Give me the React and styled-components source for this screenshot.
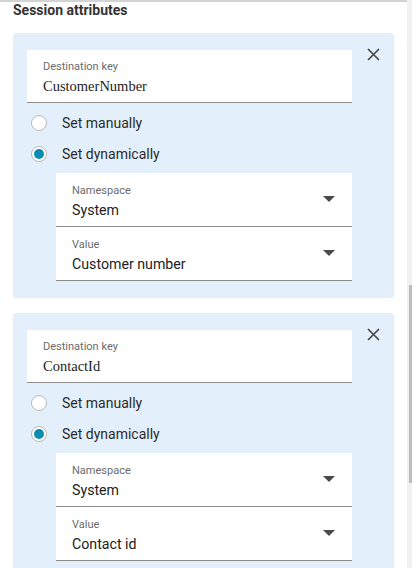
import React from "react";
import styled, { createGlobalStyle } from "styled-components";

const Global = createGlobalStyle`
  html, body { margin: 0; padding: 0; background: #fff; overflow: hidden; }
  body { font-family: Roboto, "Liberation Sans", Arial, sans-serif; }
  * { box-sizing: border-box; }
`;

const Page = styled.div`
  display: flex;
  width: 412px;
  height: 568px;
  overflow: hidden;
`;

const Main = styled.main`
  flex: 1;
  border-top: 2px solid #d3d3d3;
  padding: 0 13px;
`;

const Title = styled.h2`
  margin: 0 0 15px;
  font-size: 14px;
  line-height: 16px;
  font-weight: 700;
  color: #333;
`;

const Card = styled.section`
  background: #e3f0fb;
  border-radius: 3px;
  padding: 17px 0 17px 14px;
  margin-bottom: 15px;
`;

const HeaderRow = styled.div`
  display: flex;
  align-items: flex-start;
`;

const Field = styled.div`
  flex: ${(p) => (p.$select ? "none" : "1")};
  display: flex;
  align-items: center;
  background: #fff;
  border-bottom: 1px solid #8c8c8c;
  height: ${(p) => (p.$select ? "54px" : "53px")};
  padding: 0 17px 0 16px;
  margin-left: ${(p) => (p.$select ? "29px" : "0")};
`;

const FieldText = styled.div`
  flex: 1;
  display: flex;
  flex-direction: column;
  padding-top: 4px;
`;

const Label = styled.span`
  font-size: 11px;
  line-height: 14px;
  color: #6b6b6b;
`;

const Value = styled.span`
  font-family: ${(p) => (p.$serif ? '"Liberation Serif", "Times New Roman", serif' : 'Roboto, "Liberation Sans", sans-serif')};
  font-size: ${(p) => (p.$serif ? "14.5px" : "14.2px")};
  line-height: 20px;
  color: #222;
  margin-top: 2px;
`;

const Caret = styled.span`
  width: 0;
  height: 0;
  border-left: 6px solid transparent;
  border-right: 6px solid transparent;
  border-top: 6px solid #4a4a4a;
  margin-top: -1px;
`;

const CloseButton = styled.button`
  width: 42px;
  height: 16px;
  margin-top: -4px;
  padding: 0;
  border: 0;
  background: transparent;
  display: flex;
  align-items: center;
  justify-content: center;
  cursor: pointer;
`;

const RadioGroup = styled.div`
  display: flex;
  flex-direction: column;
  padding: 4px 0 4px 4px;
`;

const RadioRow = styled.label`
  display: flex;
  align-items: center;
  height: 31px;
  gap: 15px;
  font-size: 14px;
  color: #2b2b2b;
`;

const RadioCircle = styled.span`
  width: 16px;
  height: 16px;
  border-radius: 50%;
  border: 1px solid #b9b9b9;
  background: #fff;
  display: flex;
  align-items: center;
  justify-content: center;
  &::after {
    content: "";
    width: 10px;
    height: 10px;
    border-radius: 50%;
    background: ${(p) => (p.$checked ? "#0b8bb0" : "transparent")};
  }
`;

const SelectStack = styled.div`
  display: flex;
  flex-direction: column;
  margin-right: 42px;
`;

const Scrollbar = styled.div`
  width: 5px;
  background: #f1f1f1;
  display: flex;
  justify-content: flex-end;
`;

const Thumb = styled.div`
  width: 3px;
  height: 198px;
  margin-top: 285px;
  background: #bdbdbd;
`;

function CloseIcon() {
  return (
    <svg width="13" height="13" viewBox="0 0 13 13">
      <path d="M1 1 L12 12 M12 1 L1 12" stroke="#444" strokeWidth="1.6" fill="none" />
    </svg>
  );
}

function SelectField({ label, value }) {
  return (
    <Field $select>
      <FieldText>
        <Label>{label}</Label>
        <Value>{value}</Value>
      </FieldText>
      <Caret />
    </Field>
  );
}

function AttributeCard({ keyName, value }) {
  return (
    <Card>
      <HeaderRow>
        <Field>
          <FieldText>
            <Label>Destination key</Label>
            <Value $serif>{keyName}</Value>
          </FieldText>
        </Field>
        <CloseButton aria-label="Remove">
          <CloseIcon />
        </CloseButton>
      </HeaderRow>
      <RadioGroup>
        <RadioRow>
          <RadioCircle />
          Set manually
        </RadioRow>
        <RadioRow>
          <RadioCircle $checked />
          Set dynamically
        </RadioRow>
      </RadioGroup>
      <SelectStack>
        <SelectField label="Namespace" value="System" />
        <SelectField label="Value" value={value} />
      </SelectStack>
    </Card>
  );
}

export default function App() {
  return (
    <Page>
      <Global />
      <Main>
        <Title>Session attributes</Title>
        <AttributeCard keyName="CustomerNumber" value="Customer number" />
        <AttributeCard keyName="ContactId" value="Contact id" />
      </Main>
      <Scrollbar>
        <Thumb />
      </Scrollbar>
    </Page>
  );
}
